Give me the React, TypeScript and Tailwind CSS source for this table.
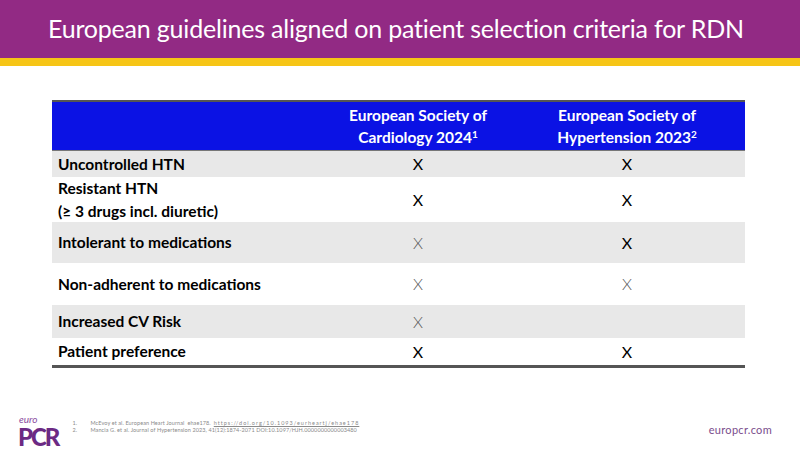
import React from "react";

const F = { fontFamily: "Lato, 'Open Sans', sans-serif" };

function Row({
  label,
  a,
  b,
  gray,
  h,
  aLight,
  bLight,
}: {
  label: React.ReactNode;
  a?: boolean;
  b?: boolean;
  gray?: boolean;
  h: string;
  aLight?: boolean;
  bLight?: boolean;
}) {
  return (
    <div className={`flex ${h} ${gray ? "bg-[#e8e8e8]" : "bg-white"}`}>
      <div className="w-[275px] flex items-center pl-[6px] text-[15.5px] font-bold text-black leading-[23px]">
        {label}
      </div>
      <div
        className={`w-[182px] flex items-center justify-center text-[16px] ${
          aLight ? "text-[#555] font-light" : "text-black"
        }`}
      >
        {a ? "X" : ""}
      </div>
      <div
        className={`flex-1 flex items-center justify-center text-[16px] ${
          bLight ? "text-[#555] font-light" : "text-black"
        }`}
      >
        {b ? "X" : ""}
      </div>
    </div>
  );
}

export default function App() {
  return (
    <div className="w-[800px] h-[450px] bg-white flex flex-col overflow-hidden relative" style={F}>
      <div className="h-[58px] bg-[#922a84] flex items-center pl-[48px] text-white text-[25px] tracking-[-0.2px]">
        European guidelines aligned on patient selection criteria for RDN
      </div>
      <div className="h-[8px] bg-[#f6c516]" />
      <div className="flex-1 flex flex-col">
        <div className="ml-[52px] mt-[34px] w-[693px] flex flex-col">
          <div className="h-[2px] bg-[#555]" />
          <div className="h-[48px] bg-[#0b12e4] flex text-white font-bold text-[15.5px] leading-[22px]">
            <div className="w-[275px]" />
            <div className="w-[182px] flex flex-col items-center justify-center text-center">
              <span>European Society of</span>
              <span>
                Cardiology 2024<sup className="text-[10px]">1</sup>
              </span>
            </div>
            <div className="flex-1 flex flex-col items-center justify-center text-center">
              <span>European Society of</span>
              <span>
                Hypertension 2023<sup className="text-[10px]">2</sup>
              </span>
            </div>
          </div>
          <div className="h-[1px] bg-[#777]" />
          <Row label="Uncontrolled HTN" a b gray h="h-[26px]" />
          <Row
            label={
              <div className="flex flex-col">
                <span>Resistant HTN</span>
                <span>(≥ 3 drugs incl. diuretic)</span>
              </div>
            }
            a
            b
            h="h-[45px]"
          />
          <Row label="Intolerant to medications" a b gray aLight h="h-[41px]" />
          <Row label="Non-adherent to  medications" a b aLight bLight h="h-[42px]" />
          <Row label="Increased CV Risk" a gray aLight h="h-[33px]" />
          <Row label="Patient preference" a b h="h-[27px]" />
          <div className="h-[3px] bg-[#555]" />
        </div>
      </div>
      <div className="h-[40px] flex items-end pb-[3px] pl-[18px] relative">
        <div className="flex flex-col leading-none">
          <span className="text-[#8a4ca0] italic text-[10px] leading-[9px] pl-[1px]">euro</span>
          <span className="text-[#6c2a84] font-black text-[24px] leading-[20px] mt-[3px] tracking-[-2px]">PCR</span>
        </div>
        <div className="ml-[14px] mb-[13px] flex flex-col text-[#8a8a8a] text-[5.5px] leading-[7px] tracking-[0.1px]">
          <div className="flex">
            <span className="w-[18px]">1.</span>
            <span>
              McEvoy et al. European Heart Journal&nbsp;&nbsp;ehae178.&nbsp;&nbsp;
              <span className="underline tracking-[1px]">https://doi.org/10.1093/eurheartj/ehae178</span>
            </span>
          </div>
          <div className="flex">
            <span className="w-[18px]">2.</span>
            <span>Mancia G. et al. Journal of Hypertension 2023, 41(12):1874-2071 DOI:10.1097/HJH.0000000000003480</span>
          </div>
        </div>
        <div className="absolute right-[28px] bottom-[12px] text-[#7a4d8c] text-[11px] tracking-[0.3px]">europcr.com</div>
      </div>
    </div>
  );
}
